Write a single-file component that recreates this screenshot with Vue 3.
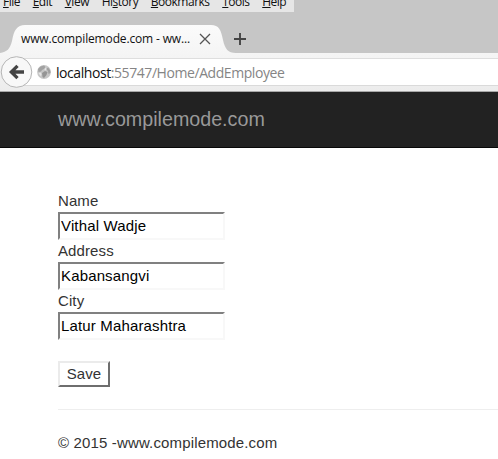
<script setup>
import { ref } from 'vue'

const menu = [
  { before: '', key: 'F', after: 'ile', cls: 'file' },
  { before: '', key: 'E', after: 'dit', cls: 'edit' },
  { before: '', key: 'V', after: 'iew', cls: 'view' },
  { before: 'Hi', key: 's', after: 'tory', cls: 'history' },
  { before: '', key: 'B', after: 'ookmarks', cls: 'bookmarks' },
  { before: '', key: 'T', after: 'ools', cls: 'tools' },
  { before: '', key: 'H', after: 'elp', cls: 'help' },
]

const fields = ref([
  { id: 'name', label: 'Name', value: 'Vithal Wadje' },
  { id: 'address', label: 'Address', value: 'Kabansangvi' },
  { id: 'city', label: 'City', value: 'Latur Maharashtra' },
])
</script>

<template>
  <div class="window">
    <nav class="menu">
      <span v-for="m in menu" :key="m.cls" class="menu-item">{{ m.before }}<u>{{ m.key }}</u>{{ m.after }}</span>
    </nav>

    <div class="tabs">
      <div class="tab">
        <svg class="tab-shape" width="236" height="28" viewBox="0 0 236 28">
          <defs>
            <linearGradient id="tabFill" x1="0" y1="0" x2="0" y2="1">
              <stop offset="0" stop-color="#fbfbfb" />
              <stop offset="1" stop-color="#f5f5f5" />
            </linearGradient>
          </defs>
          <path d="M0 28C7 27 10 24 12 16C14 5 17 0 25 0H211C219 0 221 5 223 15C225 24 228 28 236 28Z" fill="url(#tabFill)" />
        </svg>
        <span class="tab-title">www.compilemode.com - ww...</span>
        <svg class="close" width="12" height="12" viewBox="0 0 12 12">
          <path d="M1 1L11 11M11 1L1 11" stroke="#555" stroke-width="1.3" fill="none" />
        </svg>
      </div>
      <svg class="plus" width="12" height="12" viewBox="0 0 12 12">
        <path d="M6 0V12M0 6H12" stroke="#444" stroke-width="1.9" />
      </svg>
    </div>

    <div class="toolbar">
      <div class="urlbar">
        <svg class="globe" width="14" height="14" viewBox="0 0 14 14">
          <circle cx="7" cy="7" r="6.9" fill="#c6c6c6" />
          <path d="M1 4L3.5 1.5L7 0.5L8.5 2L7 4L5 5L4 6.5L1.5 7Z" fill="#a2a2a2" />
          <path d="M5 8L8 6L10.5 7L9.5 10L7 13L5.5 12Z" fill="#959595" />
          <path d="M9 4L11 2.5L13.3 5.5L13.5 8L11.5 9L11 6Z" fill="#a0a0a0" />
          <path d="M7.5 4L9 2.5L9.5 4.5L8 5.5ZM1.5 8L4 7.5L4.5 10L3.5 11Z" fill="#e6e6e6" />
        </svg>
        <span class="url"><b>localhost</b>:55747/Home/AddEmployee</span>
      </div>
      <svg class="back" width="33" height="32" viewBox="0 0 33 32">
        <circle cx="16.5" cy="16" r="15.3" fill="#f8f8f8" stroke="#b5b5b5" />
        <path d="M24 16H11.5M17.5 9.8L11.3 16L17.5 22.2" fill="none" stroke="#444" stroke-width="3.3" />
      </svg>
    </div>

    <header class="navbar"><span class="brand">www.compilemode.com</span></header>

    <main class="page">
      <form @submit.prevent>
        <div v-for="f in fields" :key="f.id" class="field">
          <label :for="f.id">{{ f.label }}</label>
          <input :id="f.id" v-model="f.value" type="text" spellcheck="false" />
        </div>
        <button class="save" type="submit">Save</button>
      </form>
      <footer><span>© 2015 -www.compilemode.com</span></footer>
    </main>
  </div>
</template>

<style>
body {
  margin: 0;
  background: #fff;
}
</style>

<style scoped>
.window {
  width: 498px;
  height: 459px;
  overflow: hidden;
  background: #fff;
  font-family: "Liberation Sans", Arial, sans-serif;
}
.window * {
  box-sizing: border-box;
}
.menu,
.tabs,
.toolbar {
  font-family: "Open Sans", "Noto Sans", sans-serif;
}
.menu {
  display: flex;
  align-items: flex-end;
  gap: 12.7px;
  width: 294px;
  height: 12px;
  padding: 0 0 2px 3px;
  background: #e6e6e6;
  box-shadow: 204px 0 0 #c6c6c6;
  color: #111;
  font-size: 12px;
  line-height: 16px;
  letter-spacing: -0.5px;
  white-space: nowrap;
}
.menu-item u {
  text-underline-offset: 1px;
  text-decoration-thickness: 1px;
}
.tabs {
  display: flex;
  height: 41px;
  padding-top: 13px;
  background: #c6c6c6;
}
.tab {
  display: flex;
  align-items: center;
  position: relative;
  width: 234px;
  height: 28px;
  padding-left: 21px;
}
.tab-shape {
  position: absolute;
  top: 0;
  left: 0;
}
.tab-title {
  position: relative;
  width: 178px;
  color: #111;
  font-size: 12px;
  line-height: 28px;
  letter-spacing: -0.15px;
  white-space: nowrap;
}
.close {
  position: relative;
}
.plus {
  margin-top: 8px;
}
.toolbar {
  position: relative;
  height: 39px;
  padding-top: 5px;
  border-bottom: 1px solid #a8a8a8;
  background: linear-gradient(#f5f5f5, #ececec);
}
.urlbar {
  display: flex;
  align-items: center;
  height: 28px;
  margin-left: 18px;
  padding-left: 19px;
  border-top: 1px solid #dedede;
  border-bottom: 1px solid #dadada;
  background: #fff;
}
.url {
  margin-left: 5px;
  padding-top: 1px;
  color: #858585;
  font-size: 14px;
  line-height: 25px;
  letter-spacing: -0.43px;
  white-space: nowrap;
}
.url b {
  color: #111;
  font-weight: 400;
}
.back {
  position: absolute;
  top: 3px;
  left: 0;
}
.navbar {
  height: 56px;
  padding-left: 58px;
  border-bottom: 1px solid #080808;
  background: #222;
}
.brand {
  color: #999;
  font-size: 19.7px;
  line-height: 54px;
}
.page {
  padding: 42px 0 0 58px;
  color: #333;
  font-size: 15px;
}
.field {
  display: flex;
  flex-direction: column;
  height: 50px;
}
.field label {
  height: 22px;
  line-height: 22px;
  letter-spacing: 0.1px;
}
.field input {
  width: 167px;
  height: 28px;
  padding: 0 1px 2px;
  border: 2px solid;
  border-color: #808080 #f8f8f8 #f8f8f8 #808080;
  border-radius: 0;
  background: #fff;
  color: #000;
  font: 15px "Liberation Sans", Arial, sans-serif;
  letter-spacing: 0.15px;
}
.save {
  display: block;
  width: 52px;
  height: 26px;
  margin-top: 21px;
  padding: 0 0 2px;
  border: 2px solid;
  border-color: #ebebeb #6e6e6e #6e6e6e #ebebeb;
  border-radius: 0;
  background: #fff;
  color: #333;
  font: 15px "Liberation Sans", Arial, sans-serif;
  letter-spacing: 0.1px;
}
footer {
  margin-top: 22px;
  padding-top: 22px;
  border-top: 1px solid #eee;
  line-height: 22px;
  letter-spacing: 0.15px;
}
</style>
